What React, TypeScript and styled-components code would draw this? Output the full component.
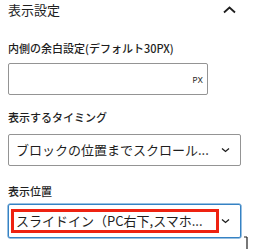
import styled, { createGlobalStyle } from "styled-components"

const Global = createGlobalStyle`
    body {
        margin: 0;
        background: #fff;
        font-family: "Noto Sans CJK JP", "Noto Sans", sans-serif;
        color: #1e1e1e;
    }
`

const Panel = styled.div`
    width: 253px;
    height: 249px;
    padding: 0 8px;
    box-sizing: border-box;
    position: relative;
`

const Header = styled.div`
    display: flex;
    align-items: center;
    justify-content: space-between;
    height: 19px;
    padding-right: 9px;
`

const Title = styled.h2`
    margin: 0;
    font-size: 13px;
    line-height: 19px;
    font-weight: 400;
    color: #1e1e1e;
`

const Field = styled.div<{ $top: number }>`
    margin-top: ${(p) => p.$top}px;
`

const Label = styled.div<{ $gap: number }>`
    font-size: 11px;
    line-height: 16px;
    font-weight: 500;
    text-transform: uppercase;
    margin-bottom: ${(p) => p.$gap}px;
`

const InputBox = styled.div`
    width: 200px;
    height: 32px;
    box-sizing: border-box;
    border: 1px solid #949494;
    border-radius: 2px;
    display: flex;
    align-items: center;
    justify-content: flex-end;
    padding-right: 4px;
`

const Suffix = styled.span`
    font-family: "Inter", "Noto Sans", sans-serif;
    font-size: 8px;
    color: #1e1e1e;
    margin-top: 2px;
`

const Select = styled.div<{ $focused?: boolean }>`
    position: relative;
    width: 233px;
    height: ${(p) => (p.$focused ? 34 : 32)}px;
    box-sizing: border-box;
    border: 1px solid ${(p) => (p.$focused ? "#3582c4" : "#949494")};
    box-shadow: ${(p) => (p.$focused ? "0 0 0 0.5px #3582c4" : "none")};
    border-radius: 2px;
    display: flex;
    align-items: center;
    padding: 0 10px 0 7px;
    gap: 8px;
`

const SelectText = styled.span`
    flex: 1;
    min-width: 0;
    font-size: 13px;
    line-height: 18px;
    white-space: nowrap;
`

const Highlight = styled.div`
    position: absolute;
    left: 2px;
    top: 4px;
    width: 208px;
    height: 24px;
    box-sizing: border-box;
    border: 3px solid #ee2211;
    pointer-events: none;
`

const Cursor = styled.svg`
    position: absolute;
    left: 243px;
    top: 236px;
`

const ChevronUp = () => (
    <svg width="13" height="8" viewBox="0 0 13 8" fill="none" stroke="#1e1e1e" strokeWidth="1.8">
        <path d="M1 6.5l5.5-5 5.5 5" />
    </svg>
)

const ChevronDown = () => (
    <svg width="9" height="6" viewBox="0 0 9 6" fill="none" stroke="#1e1e1e" strokeWidth="1.3">
        <path d="M1 1.5l3.5 3 3.5-3" />
    </svg>
)

export default function App() {
    return <>
        <Global />
        <Panel>
            <Header>
                <Title>表示設定</Title>
                <ChevronUp />
            </Header>

            <Field $top={21}>
                <Label $gap={7}>内側の余白設定(デフォルト30px)</Label>
                <InputBox>
                    <Suffix>PX</Suffix>
                </InputBox>
            </Field>

            <Field $top={14}>
                <Label $gap={9}>表示するタイミング</Label>
                <Select>
                    <SelectText>ブロックの位置までスクロール...</SelectText>
                    <ChevronDown />
                </Select>
            </Field>

            <Field $top={17}>
                <Label $gap={5}>表示位置</Label>
                <Select $focused>
                    <SelectText>スライドイン（PC右下,スマホ...</SelectText>
                    <ChevronDown />
                    <Highlight />
                </Select>
            </Field>

            <Cursor width="8" height="13" viewBox="0 0 8 13" fill="none" stroke="#1e1e1e" strokeWidth="1.2">
                <path d="M1 1h3M4 1v12" />
            </Cursor>
        </Panel>
    </>
}
